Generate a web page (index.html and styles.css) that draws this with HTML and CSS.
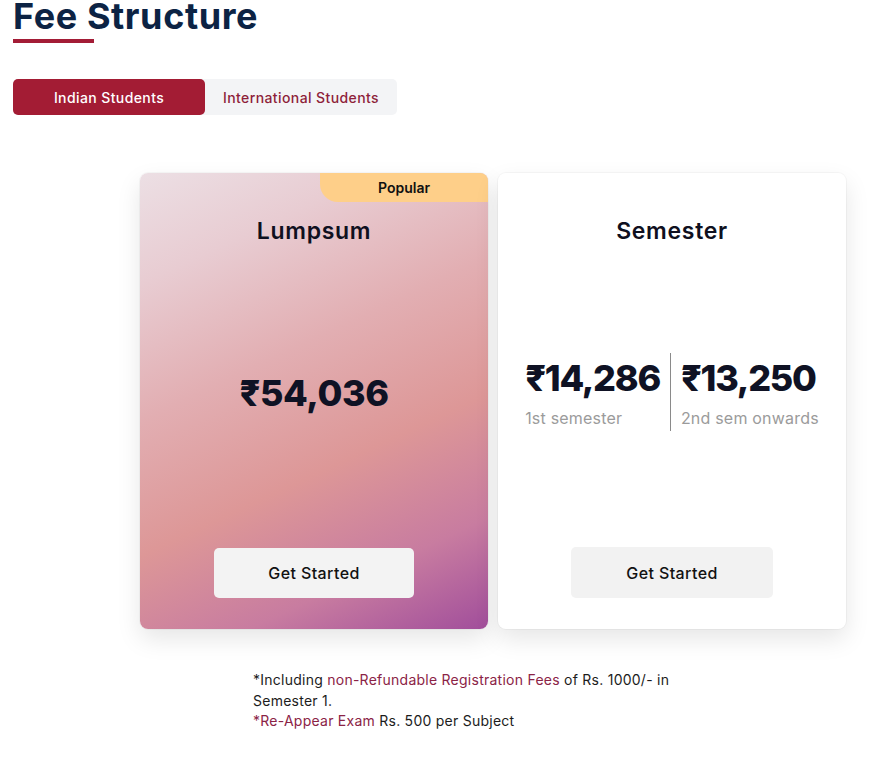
FILE: index.html
```html
<!DOCTYPE html>
<html lang="en">
<head>
<meta charset="utf-8">
<title>Fee Structure</title>
<link rel="stylesheet" href="styles.css">
</head>
<body>
<section class="fees">
  <h2 class="title">Fee Structure</h2>
  <div class="title-bar"></div>

  <div class="tabs">
    <button class="tab tab-active">Indian Students</button>
    <button class="tab">International Students</button>
  </div>

  <div class="cards">
    <div class="card card-lump">
      <span class="badge">Popular</span>
      <h3 class="card-title">Lumpsum</h3>
      <div class="price-area">
        <div class="price">₹54,036</div>
      </div>
      <button class="cta">Get Started</button>
    </div>

    <div class="card">
      <h3 class="card-title">Semester</h3>
      <div class="price-area">
        <div class="split">
          <div class="split-col">
            <div class="price">₹14,286</div>
            <div class="price-label">1st semester</div>
          </div>
          <div class="split-col split-right">
            <div class="price">₹13,250</div>
            <div class="price-label">2nd sem onwards</div>
          </div>
        </div>
      </div>
      <button class="cta cta-flat">Get Started</button>
    </div>
  </div>

  <div class="notes">
    <p>*Including <span class="hl">non-Refundable Registration Fees</span> of Rs. 1000/- in Semester 1.</p>
    <p><span class="hl">*Re-Appear Exam</span> Rs. 500 per Subject</p>
  </div>
</section>
</body>
</html>
```

FILE: styles.css
```css
* { box-sizing: border-box; }

body {
  margin: 0;
  background: #ffffff;
  font-family: "Inter", "Noto Sans", "DejaVu Sans", sans-serif;
  color: #111;
}

.fees {
  padding: 0 13px;
}

.title {
  margin: -5px 0 0 0;
  font-size: 36px;
  line-height: 43px;
  font-weight: 700;
  color: #0c2344;
  letter-spacing: 0.6px;
}

.title-bar {
  width: 81px;
  height: 4px;
  background: #a31c36;
  margin-top: 1px;
}

.tabs {
  display: flex;
  width: 384px;
  height: 36px;
  margin-top: 36px;
  background: #f3f4f6;
  border-radius: 5px;
}

.tab {
  border: 0;
  background: transparent;
  font-family: inherit;
  font-size: 14px;
  font-weight: 500;
  letter-spacing: 0.4px;
  color: #8e1f3a;
  cursor: pointer;
  border-radius: 5px;
  padding: 0;
}

.tab-active {
  width: 192px;
  background: #a31c34;
  color: #ffffff;
}

.tab:not(.tab-active) {
  flex: 1;
}

.cards {
  display: flex;
  gap: 10px;
  margin: 58px 0 0 127px;
}

.card {
  position: relative;
  width: 348px;
  height: 456px;
  background: #ffffff;
  border-radius: 8px;
  box-shadow: 0 10px 24px rgba(0, 0, 0, 0.10), 0 0 0 1px rgba(0, 0, 0, 0.03);
  display: flex;
  flex-direction: column;
  align-items: center;
  padding: 44px 0 31px;
  overflow: hidden;
}

.card-lump {
  background: linear-gradient(155deg, #ecdfe4 0%, #e8ccd2 18%, #e2aeb2 40%, #dd9797 62%, #c87ca0 82%, #a14e9b 100%);
}

.badge {
  position: absolute;
  top: 0;
  right: 0;
  width: 168px;
  height: 29px;
  background: #fecf89;
  border-bottom-left-radius: 18px;
  font-size: 14px;
  font-weight: 600;
  line-height: 29px;
  text-align: center;
  color: #111;
}

.card-title {
  margin: 0;
  font-size: 23px;
  line-height: 28px;
  font-weight: 600;
  letter-spacing: 0.7px;
  color: #0f1020;
}

.price-area {
  flex: 1;
  display: flex;
  align-items: center;
  justify-content: center;
  padding-bottom: 8px;
}

.price {
  font-size: 36px;
  line-height: 44px;
  font-weight: 800;
  color: #0f1224;
  letter-spacing: -0.4px;
}

.split {
  display: flex;
  align-items: stretch;
}

.split-col {
  padding: 3px 10px 2px 0;
}

.split-right {
  border-left: 1px solid #8a8a8a;
  padding: 3px 0 2px 10px;
}

.split .price {
  letter-spacing: -1.3px;
}

.price-label {
  margin-top: 7px;
  font-size: 16px;
  line-height: 22px;
  color: #9b9b9b;
  letter-spacing: 0.2px;
}

.cta {
  width: 200px;
  height: 50px;
  border: 0;
  border-radius: 5px;
  background: #f3f3f3;
  font-family: inherit;
  font-size: 16px;
  font-weight: 500;
  letter-spacing: 0.4px;
  color: #111;
  cursor: pointer;
}

.cta-flat {
  width: 202px;
  height: 51px;
  background: #f2f2f2;
}

.notes {
  margin: 41px 0 0 240px;
  width: 440px;
  font-size: 14px;
  line-height: 20.5px;
  letter-spacing: 0.25px;
  color: #1c1c1c;
}

.notes p {
  margin: 0;
}

.hl {
  color: #8b2346;
}
```
